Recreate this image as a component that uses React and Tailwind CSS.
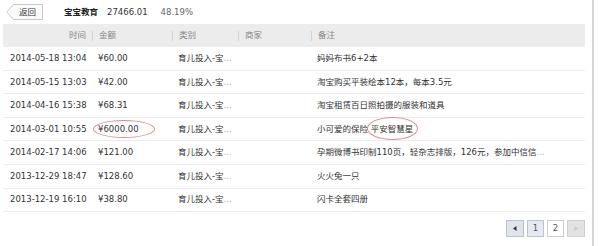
import React from "react";

const rows = [
  { t: "2014-05-18 13:04", a: "¥60.00", n: "妈妈布书6+2本" },
  { t: "2014-05-15 13:03", a: "¥42.00", n: "淘宝购买平装绘本12本，每本3.5元" },
  { t: "2014-04-16 15:38", a: "¥68.31", n: "淘宝租赁百日照拍摄的服装和道具" },
  { t: "2014-03-01 10:55", a: "¥6000.00", n: "小可爱的保险 平安智慧星", circle: true },
  { t: "2014-02-17 14:06", a: "¥121.00", n: "孕期微博书印制110页，轻杂志排版，126元，参加中信信", more: true },
  { t: "2013-12-29 18:47", a: "¥128.60", n: "火火兔一只" },
  { t: "2013-12-19 16:10", a: "¥38.80", n: "闪卡全套四册" },
];

const font = { fontFamily: '"DejaVu Sans", "Noto Sans CJK SC", sans-serif' };

export default function App() {
  return (
    <div className="relative w-[600px] h-[246px] bg-white text-[8.5px] text-[#333] overflow-hidden" style={font}>
      <div className="flex h-full">
        <div className="w-[592px] pl-[3px] pr-[7px] flex flex-col">
          {/* top bar */}
          <div className="h-[24px] flex items-center">
            <div className="relative ml-[3px] w-[37px] h-[16px]">
              <svg className="absolute inset-0" width="37" height="16" viewBox="0 0 37 16">
                <path d="M7.5 0.5 L36.5 0.5 L36.5 15.5 L7.5 15.5 L0.8 8 Z" fill="#fbfbfb" stroke="#c8c8c8" />
              </svg>
              <span className="absolute inset-0 flex items-center justify-center pl-[6px] text-[#333]">返回</span>
            </div>
            <span className="ml-[21px] font-bold text-[#222]">宝宝教育</span>
            <span className="ml-[9px] text-[#333]">27466.01</span>
            <span className="ml-[13px] text-[#666]">48.19%</span>
          </div>
          {/* header */}
          <div className="h-[23px] bg-[#ececec] flex items-center text-[#888]">
            <div className="w-[89px] flex justify-end pr-[6px]">时间</div>
            <div className="w-[80px] flex items-center"><span className="w-px h-[10px] bg-[#d4d4d4]" /><span className="ml-[6px]">金额</span></div>
            <div className="w-[66px] flex items-center"><span className="w-px h-[10px] bg-[#d4d4d4]" /><span className="ml-[6px]">类别</span></div>
            <div className="w-[73px] flex items-center"><span className="w-px h-[10px] bg-[#d4d4d4]" /><span className="ml-[6px]">商家</span></div>
            <div className="flex-1 flex items-center"><span className="w-px h-[10px] bg-[#d4d4d4]" /><span className="ml-[6px]">备注</span></div>
          </div>
          {rows.map((r, i) => (
            <div key={i} className="h-[23.6px] flex items-center border-b border-[#ebebf0] whitespace-nowrap">
              <div className="w-[89px] pl-[7px]">{r.t}</div>
              <div className="w-[80px] pl-[6px] relative">
                {r.a}
                {r.circle && (
                  <span className="absolute left-[1px] top-[-3px] w-[62px] h-[18px] rounded-[50%] border border-[#e58a8a]" />
                )}
              </div>
              <div className="w-[66px] pl-[6px]">育儿投入-宝<span className="text-[#aaa]">...</span></div>
              <div className="w-[73px]"></div>
              <div className="flex-1 pl-[6px] relative">
                {r.n}
                {r.more && <span className="text-[#aaa]">...</span>}
                {r.circle && (
                  <span className="absolute left-[56px] top-[-6px] w-[51px] h-[23px] rounded-[50%] border border-[#e58a8a]" />
                )}
              </div>
            </div>
          ))}
          {/* pagination */}
          <div className="flex justify-end gap-[3px] mt-[8px] pr-0">
            <div className="w-[18px] h-[17px] bg-[#dfe4ec] border border-[#b9c2cf] flex items-center justify-center">
              <svg width="4" height="5" viewBox="0 0 4 5"><path d="M3.5 0 L0 2.5 L3.5 5 Z" fill="#333" /></svg>
            </div>
            <div className="w-[17px] h-[17px] bg-[#e6eaf0] border border-[#bcc4d0] flex items-center justify-center text-[#555]">1</div>
            <div className="w-[17px] h-[17px] bg-white border border-[#c8ccd4] flex items-center justify-center text-[#555]">2</div>
            <div className="w-[18px] h-[17px] bg-[#e2e2e2] border border-[#cfcfcf] flex items-center justify-center">
              <svg width="4" height="5" viewBox="0 0 4 5"><path d="M0.5 0 L4 2.5 L0.5 5 Z" fill="#c8c8c8" /></svg>
            </div>
          </div>
        </div>
        <div className="w-[2px] bg-[#d6d6d6]" />
        <div className="flex-1 bg-white" />
      </div>
    </div>
  );
}
